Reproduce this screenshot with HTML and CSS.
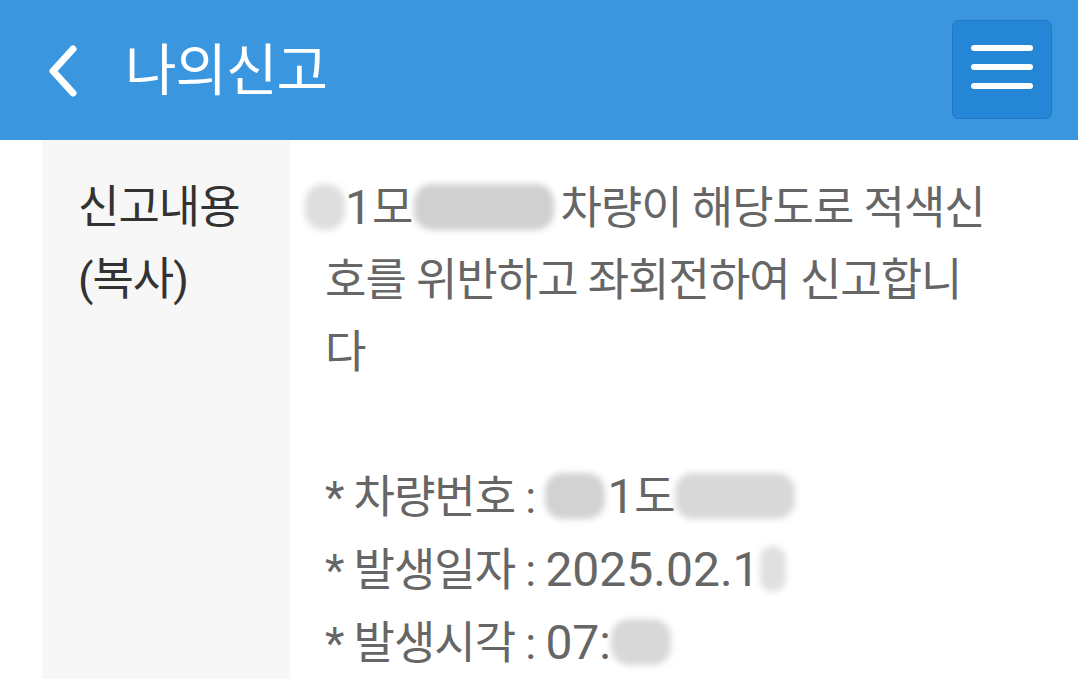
FILE: index.html
```html
<!DOCTYPE html>
<html lang="ko">
<head>
<meta charset="utf-8">
<link rel="stylesheet" href="styles.css">
</head>
<body>
<header class="topbar">
  <div class="topbar-left">
    <svg class="back" width="40" height="60" viewBox="0 0 40 60"><path d="M30 8 L10 30 L30 52" fill="none" stroke="#fff" stroke-width="7" stroke-linecap="round" stroke-linejoin="round"/></svg>
    <h1 class="title">나의신고</h1>
  </div>
  <button class="menu" aria-label="메뉴">
    <span class="bar"></span><span class="bar"></span><span class="bar"></span>
  </button>
</header>
<main class="detail">
  <div class="row">
    <div class="label">신고내용<br>(복사)</div>
    <div class="value">
      <p><span class="blur b1"></span><span class="num">1</span>모<span class="blur b2"></span>차량이 해당도로 적색신호를 위반하고 좌회전하여 신고합니다</p>
      <p class="gap">&nbsp;</p>
      <p>* 차량번호 : <span class="blur b3"></span><span class="num">1</span>도<span class="blur b4"></span></p>
      <p>* 발생일자 : <span class="num">2025.02.1</span><span class="blur b5"></span></p>
      <p>* 발생시각 : <span class="num">07:</span><span class="blur b6"></span></p>
    </div>
  </div>
</main>
</body>
</html>
```
FILE: styles.css
```css
html, body {
  margin: 0;
  padding: 0;
  background: #fff;
  overflow: hidden;
}
body {
  font-family: Roboto, "Noto Sans CJK KR", sans-serif;
  width: 1078px;
  height: 679px;
}
.topbar {
  height: 140px;
  background: #3a97df;
  display: flex;
  align-items: center;
  justify-content: space-between;
  padding: 0 26px 0 43px;
  box-sizing: border-box;
}
.topbar-left {
  display: flex;
  align-items: center;
  gap: 42px;
}
.back {
  display: block;
  margin-top: 2px;
}
.title {
  margin: 0;
  color: #fff;
  font-family: "Noto Sans CJK KR", sans-serif;
  font-weight: 400;
  font-size: 56px;
  letter-spacing: -1px;
  line-height: 1;
  margin-top: -8px;
}
.menu {
  width: 100px;
  height: 99px;
  margin-top: -2px;
  background: #2686d6;
  border: 1px solid #2179c6;
  border-radius: 6px;
  display: flex;
  flex-direction: column;
  align-items: center;
  justify-content: center;
  gap: 13px;
  padding: 0 0 4px;
}
.bar {
  display: block;
  width: 62px;
  height: 6px;
  border-radius: 3px;
  background: #fff;
}
.detail {
  padding: 0 0 0 42px;
}
.row {
  display: flex;
}
.label {
  width: 248px;
  flex: none;
  background: #f7f7f7;
  box-sizing: border-box;
  padding: 32px 0 40px 36px;
  color: #333;
  font-size: 45px;
  line-height: 72px;
  letter-spacing: -1px;
}
.value {
  flex: 1;
  padding: 32px 82px 40px 35px;
  color: #666;
  font-size: 45px;
  line-height: 72px;
  letter-spacing: -1px;
}
.value p {
  margin: 0;
}
.num {
  font-size: 48px;
  letter-spacing: 0;
}
.blur {
  display: inline-block;
  vertical-align: -6px;
  height: 46px;
  background: #d6d6d6;
  border-radius: 18px;
  filter: blur(3px);
}
.b1 { width: 40px; margin-left: -20px; margin-right: 0; background: #dedede; }
.b2 { width: 140px; margin: 0 6px 0 2px; background: #d0d0d0; }
.b3 { width: 60px; margin-right: 2px; background: #d2d2d2; }
.b4 { width: 120px; background: #d8d8d8; }
.b5 { width: 26px; background: #e0e0e0; }
.b6 { width: 60px; background: #d8d8d8; }
```
